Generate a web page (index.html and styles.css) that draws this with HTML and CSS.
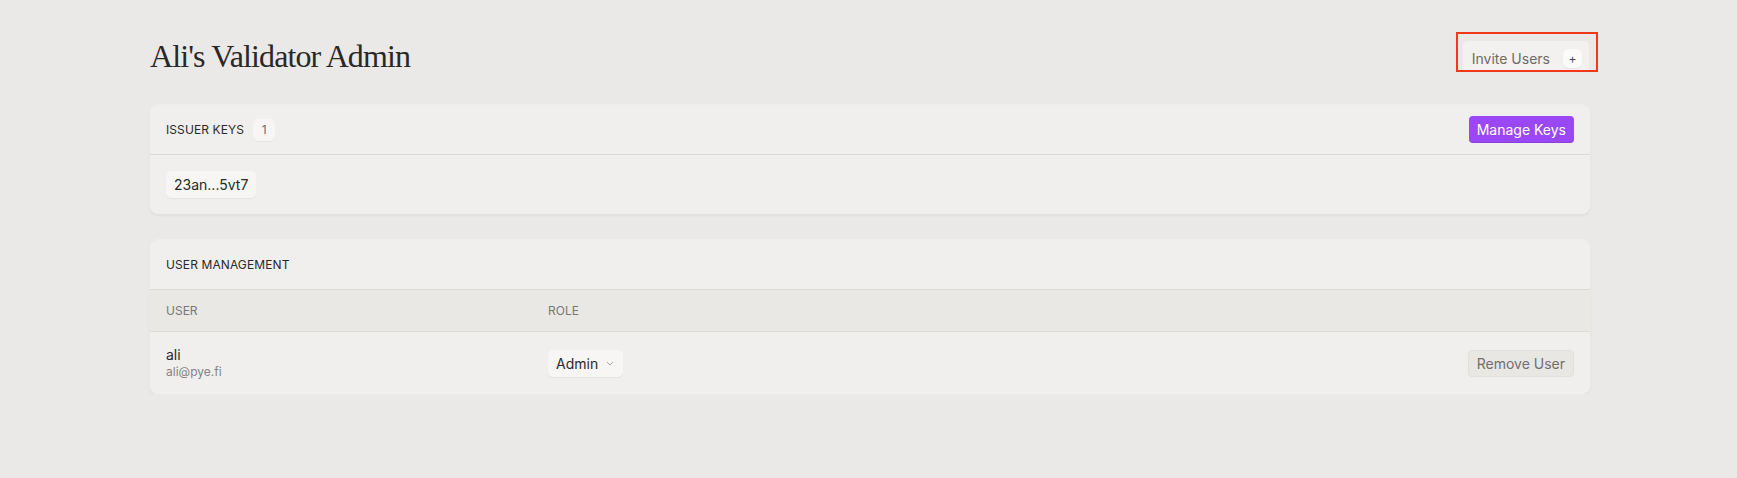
FILE: index.html
```html
<!DOCTYPE html>
<html>
<head>
<meta charset="utf-8">
<link rel="stylesheet" href="styles.css">
</head>
<body>
<div class="page">
  <header class="top">
    <h1 class="title">Ali's Validator Admin</h1>
    <div class="highlight">
      <button class="invite">Invite Users <span class="plus">+</span></button>
    </div>
  </header>

  <section class="card">
    <div class="card-head">
      <div class="head-left">
        <span class="label">ISSUER KEYS</span>
        <span class="count">1</span>
      </div>
      <button class="primary">Manage Keys</button>
    </div>
    <div class="card-body">
      <span class="chip">23an...5vt7</span>
    </div>
  </section>

  <section class="card card-users">
    <div class="card-head">
      <span class="label">USER MANAGEMENT</span>
    </div>
    <div class="table-head">
      <span>USER</span>
      <span>ROLE</span>
      <span></span>
    </div>
    <div class="table-row">
      <div class="user">
        <span class="name">ali</span>
        <span class="email">ali@pye.fi</span>
      </div>
      <div class="role">
        <span class="select">Admin
          <svg class="chev" width="8" height="5" viewBox="0 0 8 5"><path d="M1 1l3 3 3-3" fill="none" stroke="#aaa7a3" stroke-width="1"/></svg>
        </span>
      </div>
      <button class="remove">Remove User</button>
    </div>
  </section>
</div>
</body>
</html>
```

FILE: styles.css
```css
* { box-sizing: border-box; }
html, body {
  margin: 0;
  padding: 0;
  background: #ebe9e7;
  font-family: Inter, "Noto Sans", sans-serif;
  color: #2b2927;
}
.page {
  padding: 32px 147px 0 150px;
}
.top {
  display: flex;
  justify-content: space-between;
  align-items: center;
  height: 40px;
  margin-bottom: 33px;
}
.title {
  margin: 0;
  padding-top: 8px;
  font-family: "Liberation Serif", "Times New Roman", serif;
  font-weight: normal;
  font-size: 32px;
  line-height: 40px;
  letter-spacing: -0.9px;
  color: #2a2826;
}
.highlight {
  border: 2px solid #f2371b;
  padding: 7px 7px 0 5px;
  margin-right: -8px;
  height: 40px;
  overflow: hidden;
}
.invite {
  display: flex;
  align-items: center;
  gap: 13px;
  height: 31px;
  padding: 4px 7px 0 9px;
  border: none;
  border-radius: 5px 5px 0 0;
  background: #f2f1ef;
  font-family: Inter, sans-serif;
  font-size: 14px;
  color: #6e6b68;
}
.plus {
  display: inline-flex;
  align-items: center;
  justify-content: center;
  flex: none;
  width: 19px;
  height: 19px;
  border-radius: 6px;
  background: #fbfbfa;
  font-size: 12px;
  color: #4a4846;
  box-shadow: 0 1px 1px rgba(0,0,0,0.05);
}
.card {
  background: #f0efed;
  border-radius: 8px;
  box-shadow: 0 1px 3px rgba(0,0,0,0.09), 0 0 0 1px rgba(255,255,255,0.35);
  overflow: hidden;
}
.card-users {
  margin-top: 26px;
}
.card-head {
  height: 50px;
  display: flex;
  align-items: center;
  justify-content: space-between;
  padding: 0 16px;
  border-bottom: 1px solid #dddbd8;
}
.head-left {
  display: flex;
  align-items: center;
  gap: 9px;
}
.label {
  font-size: 12px;
  letter-spacing: 0.1px;
  color: #2b2927;
}
.count {
  display: inline-flex;
  align-items: center;
  justify-content: center;
  width: 22px;
  height: 22px;
  border-radius: 6px;
  background: #f7f6f4;
  font-size: 12px;
  color: #6e6b68;
  box-shadow: 0 1px 1px rgba(0,0,0,0.04);
}
.primary {
  height: 27px;
  padding: 0 8px;
  border: none;
  border-radius: 4px;
  background: #9a48f6;
  color: #fff;
  font-family: Inter, sans-serif;
  font-size: 14px;
  box-shadow: inset 0 -1px 0 rgba(0,0,0,0.12);
}
.card-body {
  padding: 16px;
}
.chip {
  display: inline-flex;
  align-items: center;
  height: 27px;
  padding: 0 8px;
  border-radius: 5px;
  background: #f7f6f5;
  font-size: 14px;
  color: #2b2927;
  box-shadow: 0 1px 1px rgba(0,0,0,0.05);
}
.table-head, .table-row {
  display: grid;
  grid-template-columns: 382px 1fr auto;
  align-items: center;
  padding: 0 16px;
}
.table-head {
  height: 42px;
  background: #e9e8e5;
  border-bottom: 1px solid #dddbd8;
  font-size: 12px;
  color: #7a7774;
}
.table-row {
  height: 62px;
}
.user {
  display: flex;
  flex-direction: column;
}
.name {
  font-size: 14px;
  line-height: 18px;
  color: #2b2927;
}
.email {
  font-size: 12px;
  line-height: 16px;
  color: #85827f;
}
.select {
  display: inline-flex;
  align-items: center;
  gap: 8px;
  height: 27px;
  padding: 0 9px 0 8px;
  border-radius: 5px;
  background: #f7f6f5;
  font-size: 14px;
  color: #2b2927;
  box-shadow: 0 1px 1px rgba(0,0,0,0.05);
}
.remove {
  height: 27px;
  padding: 0 8px;
  border: 1px solid #e2e0dd;
  border-radius: 4px;
  background: #e8e7e4;
  font-family: Inter, sans-serif;
  font-size: 14px;
  color: #716e6b;
}
```
